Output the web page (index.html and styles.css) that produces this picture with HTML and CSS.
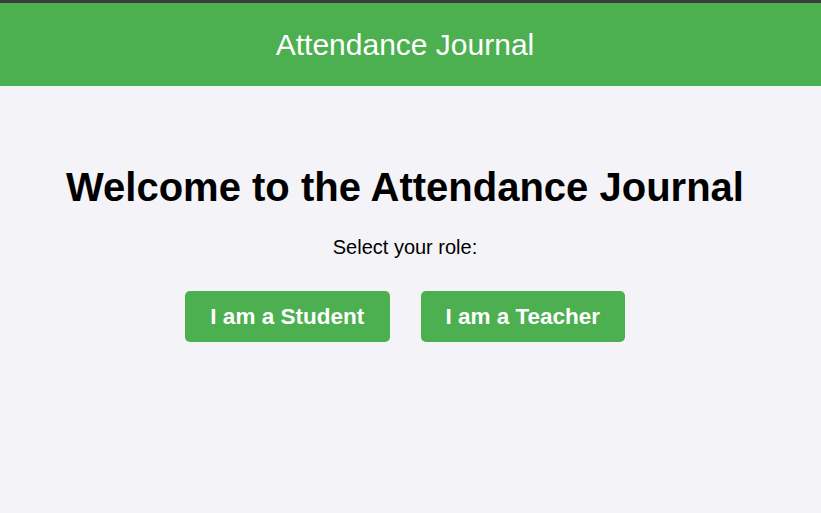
FILE: index.html
```html
<!DOCTYPE html>
<html lang="en">
<head>
<meta charset="utf-8">
<title>Attendance Journal</title>
<link rel="stylesheet" href="styles.css">
</head>
<body>
<div class="topline"></div>
<header class="header">
  <div class="header-title">Attendance Journal</div>
</header>
<main class="main">
  <h1 class="welcome">Welcome to the Attendance Journal</h1>
  <p class="prompt">Select your role:</p>
  <div class="roles">
    <button class="role-btn">I am a Student</button>
    <button class="role-btn">I am a Teacher</button>
  </div>
</main>
</body>
</html>
```
FILE: styles.css
```css
html, body {
  margin: 0;
  padding: 0;
}
body {
  background: #f4f4f8;
  font-family: "Liberation Sans", Arial, sans-serif;
  color: #000;
}
.topline {
  height: 3px;
  background: #3c3c3c;
}
.header {
  background: #4caf50;
  height: 83px;
  display: flex;
  align-items: center;
  justify-content: center;
  padding-right: 11px;
}
.header-title {
  color: #fff;
  font-size: 30px;
  line-height: 34px;
}
.main {
  display: flex;
  flex-direction: column;
  align-items: center;
  padding-top: 78px;
  padding-right: 11px;
}
.welcome {
  margin: 0;
  font-size: 40px;
  line-height: 46px;
  font-weight: bold;
}
.prompt {
  margin: 26px 0 0;
  font-size: 20px;
  line-height: 22px;
}
.roles {
  display: flex;
  gap: 31px;
  margin-top: 33px;
}
.role-btn {
  background: #4caf50;
  color: #fff;
  border: none;
  border-radius: 5px;
  font-family: "Liberation Sans", Arial, sans-serif;
  font-size: 22.5px;
  font-weight: bold;
  height: 51px;
  width: 204.5px;
  padding: 0;
}
```
